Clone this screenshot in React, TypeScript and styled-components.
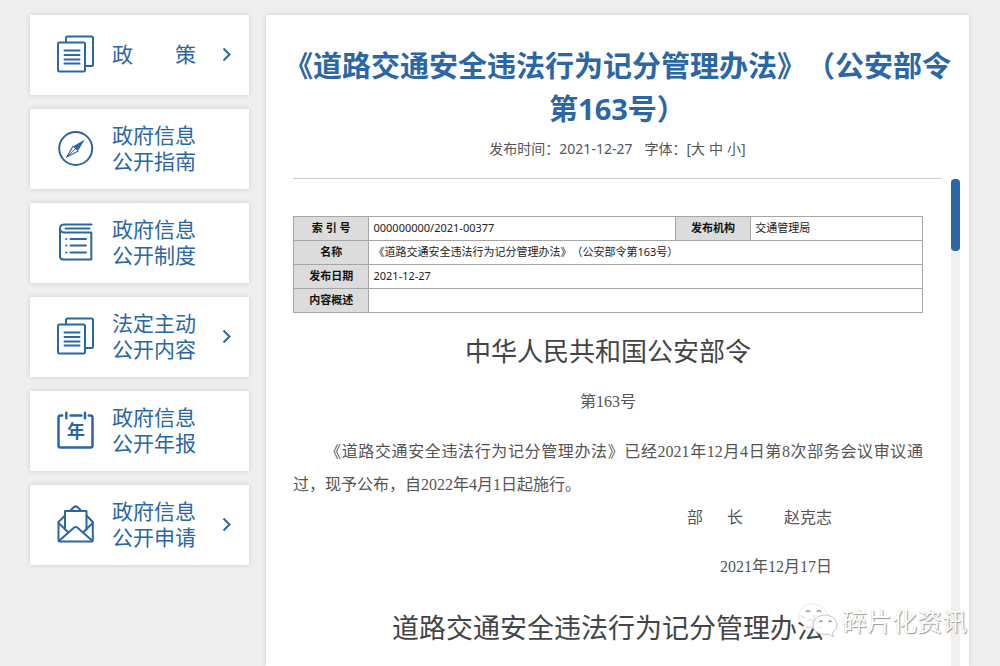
import React from "react";
import styled, { createGlobalStyle } from "styled-components";

const blue = "#2b66a5";
const sans = `"Noto Sans", "Noto Sans CJK SC", sans-serif`;
const serif = `"Liberation Serif", "Noto Sans CJK SC", serif`;

const GlobalStyle = createGlobalStyle`
  *, *::before, *::after { box-sizing: border-box; }
  body {
    margin: 0;
    background: #efefef;
    color: #444;
    font-family: ${sans};
    text-spacing-trim: space-all;
  }
  h1, h2, p { margin: 0; font-weight: 400; }
`;

const Page = styled.div`
  position: relative;
  display: grid;
  grid-template-columns: 219px minmax(0, 1fr);
  gap: 17px;
  min-height: 100vh;
  padding: 15px 31px 0 30px;
  overflow: hidden;
`;

const Sidebar = styled.nav`
  display: flex;
  flex-direction: column;
  gap: 14px;
`;

const NavCard = styled.a`
  display: flex;
  align-items: center;
  gap: 17px;
  min-height: 80px;
  padding: 0 18px 2px 27px;
  background: #fff;
  box-shadow: 0 0 5px rgba(0, 0, 0, 0.14);
  color: ${blue};
  font-size: 21px;
  line-height: 26px;
  text-decoration: none;
`;

const NavLabel = styled.span`
  white-space: pre;
`;

const NavIcon = styled.svg`
  flex: none;
  width: 38px;
  height: 38px;
  fill: none;
  stroke: currentColor;
  stroke-width: 2;
  stroke-linecap: round;
  stroke-linejoin: round;
`;

const Chevron = styled.svg`
  flex: none;
  width: 9px;
  height: 14px;
  margin-left: auto;
  fill: none;
  stroke: currentColor;
  stroke-width: 2;
`;

const Main = styled.main`
  display: flex;
  flex-direction: column;
  padding-top: 29px;
  background: #fff;
  box-shadow: 0 0 5px rgba(0, 0, 0, 0.14);
`;

const Header = styled.header`
  padding: 0 15px;
  text-align: center;
`;

const Title = styled.h1`
  color: ${blue};
  font-size: 29px;
  font-weight: 700;
  line-height: 43px;
`;

const Meta = styled.div`
  display: flex;
  justify-content: center;
  gap: 12px;
  margin: 9px 0 19px;
  color: #555;
  font-size: 14px;
  line-height: 20px;
`;

const SizePicker = styled.span`
  display: inline-flex;
  gap: 4px;
`;

const SizeButton = styled.button`
  padding: 0;
  border: 0;
  background: none;
  color: inherit;
  font: inherit;
  cursor: pointer;
`;

const Scroller = styled.div`
  display: flex;
  flex: 1;
  gap: 10px;
  padding: 0 9px 0 27px;
`;

const Article = styled.article`
  flex: 1;
  min-width: 0;
  padding: 37px 18px 0 0;
  border-top: 1px solid #ccc;
`;

const Rail = styled.div`
  flex: none;
  width: 9px;
  padding-top: 1px;
  background: #f0f0f0 content-box;
`;

const Thumb = styled.div`
  height: 72px;
  border-radius: 4px;
  background: ${blue};
`;

const InfoTable = styled.table`
  width: 100%;
  border-collapse: collapse;
  table-layout: fixed;
  border: 1px solid #999;
  color: #222;
  font-size: 11px;
  line-height: 16px;

  th,
  td {
    height: 24px;
    padding: 0 4px 1px;
    border: 1px solid #a6a6a6;
    text-align: left;
  }

  th {
    background: #dcdcdc;
    color: #111;
    text-align: center;
  }
`;

const Col = styled.col<{ $width?: string }>`
  width: ${(p) => p.$width ?? "auto"};
`;

const Heading = styled.h2<{ $size: number; $top: number }>`
  margin-top: ${(p) => p.$top}px;
  color: #444;
  font-size: ${(p) => p.$size}px;
  line-height: 33px;
  text-align: center;
`;

const Paragraph = styled.p<{ $align?: string }>`
  margin-top: 17px;
  color: #555;
  font-family: ${serif};
  font-size: 16px;
  line-height: 33px;
  text-align: ${(p) => p.$align ?? "justify"};
  text-indent: ${(p) => (p.$align ? "0" : "2em")};
`;

const Signature = styled.div`
  padding-right: 91px;
  color: #555;
  font-family: ${serif};
  font-size: 16px;
  line-height: 33px;
  text-align: right;
`;

const Signer = styled.p`
  display: flex;
  justify-content: flex-end;
  gap: 41px;
  margin-bottom: 16px;
`;

const Post = styled.span`
  display: flex;
  gap: 24px;
`;

const Watermark = styled.div`
  position: absolute;
  right: 33px;
  bottom: 27px;
  display: flex;
  align-items: center;
  gap: 4px;
  color: #fff;
  font-size: 25px;
  line-height: 36px;
  text-shadow: 1px 1px 1px #999, 0 0 1px #bbb;
`;

const ChatLogo = styled.svg`
  width: 40px;
  height: 36px;
`;

function DocsIcon() {
  return (
    <NavIcon viewBox="0 0 38 38" aria-hidden="true">
      <path d="M9 6.500V3Q9 1.500 10.500 1.500H34.500Q36 1.500 36 3V29.500Q36 31 34.500 31H29" />
      <rect x="1" y="7.500" width="27" height="29" rx="1.500" />
      <path d="M7.500 15.500H22.500M7.500 20H22.500M7.500 24.500H22.500M7.500 28.500H22.500" />
    </NavIcon>
  );
}

function CompassIcon() {
  return (
    <NavIcon viewBox="0 0 38 38" aria-hidden="true">
      <circle cx="18.700" cy="19.500" r="16.500" />
      <path d="M27.800 10.500L15.800 17.500L20.800 22.300Z" fill="currentColor" stroke="none" />
      <path d="M15.800 17.500L9.800 28L20.800 22.300" strokeWidth="1.200" />
      <path d="M9.800 28L18.300 20" strokeWidth="1" />
    </NavIcon>
  );
}

function BookIcon() {
  return (
    <NavIcon viewBox="0 0 38 38" aria-hidden="true">
      <path d="M34.500 1.500H7Q3 1.800 3 5.500V33Q3 36.500 6.500 36.500H34.300V9.500H7Q3 9.200 3 5.500M8.500 5.500H32.500" />
      <path d="M13.500 16H29M13.500 22.500H29M13.500 29.500H29M9.300 16H9.400M9.300 22.500H9.400M9.300 29.500H9.400" />
    </NavIcon>
  );
}

const CalendarText = styled.text`
  fill: currentColor;
  stroke: none;
  font-size: 18px;
  font-weight: 700;
  text-anchor: middle;
`;

function CalendarIcon() {
  return (
    <NavIcon viewBox="0 0 38 38" aria-hidden="true">
      <path
        d="M5.200 4.500H3.500Q1.500 4.500 1.500 6.500V34.500Q1.500 36.500 3.500 36.500H33.500Q35.500 36.500 35.500 34.500V6.500Q35.500 4.500 33.500 4.500H31.800M13.500 4.500H24.500M9.300 1.700V7.300M28 1.700V7.300"
        strokeWidth="2.500"
      />
      <CalendarText x="19" y="27">年</CalendarText>
    </NavIcon>
  );
}

function MailIcon() {
  return (
    <NavIcon viewBox="0 0 38 38" aria-hidden="true">
      <path d="M8 10.500L1.500 17V35.500Q1.500 36.500 2.500 36.500H34.800Q35.800 36.500 35.800 35.500V17L29.500 10.500" />
      <path d="M8 24.500V6H29.500V24.500M13.500 5.500L17 2Q18.700 .7 20.400 2L24 5.500" />
      <path d="M1.500 18L10.500 26.500M35.800 18L27 26.500M2.500 35.500L16 23.500Q18.700 20.700 21.400 23.500L35 35.500" />
    </NavIcon>
  );
}

const navItems = [
  { label: "政　　策", Icon: DocsIcon, more: true },
  { label: "政府信息\n公开指南", Icon: CompassIcon, more: false },
  { label: "政府信息\n公开制度", Icon: BookIcon, more: false },
  { label: "法定主动\n公开内容", Icon: DocsIcon, more: true },
  { label: "政府信息\n公开年报", Icon: CalendarIcon, more: false },
  { label: "政府信息\n公开申请", Icon: MailIcon, more: true },
];

export default function App() {
  return (
    <>
      <GlobalStyle />
      <Page lang="zh-CN">
        <Sidebar>
          {navItems.map(({ label, Icon, more }) => (
            <NavCard href="#" key={label}>
              <Icon />
              <NavLabel>{label}</NavLabel>
              {more && (
                <Chevron viewBox="0 0 9 14" aria-hidden="true">
                  <path d="M1.500 1.500L7.500 7.500L1.500 13.500" />
                </Chevron>
              )}
            </NavCard>
          ))}
        </Sidebar>
        <Main>
          <Header>
            <Title>《道路交通安全违法行为记分管理办法》（公安部令第163号）</Title>
            <Meta>
              <span>发布时间：2021-12-27</span>
              <span>
                字体：
                <SizePicker>
                  <span>[<SizeButton type="button">大</SizeButton></span>
                  <SizeButton type="button">中</SizeButton>
                  <span><SizeButton type="button">小</SizeButton>]</span>
                </SizePicker>
              </span>
            </Meta>
          </Header>
          <Scroller>
            <Article>
              <InfoTable>
                <colgroup>
                  <Col $width="12%" />
                  <Col />
                  <Col $width="12%" />
                  <Col $width="27.3%" />
                </colgroup>
                <tbody>
                  <tr>
                    <th scope="row">索 引 号</th>
                    <td>000000000/2021-00377</td>
                    <th scope="row">发布机构</th>
                    <td>交通管理局</td>
                  </tr>
                  <tr>
                    <th scope="row">名称</th>
                    <td colSpan={3}>《道路交通安全违法行为记分管理办法》（公安部令第163号）</td>
                  </tr>
                  <tr>
                    <th scope="row">发布日期</th>
                    <td colSpan={3}>2021-12-27</td>
                  </tr>
                  <tr>
                    <th scope="row">内容概述</th>
                    <td colSpan={3} />
                  </tr>
                </tbody>
              </InfoTable>
              <Heading $size={26} $top={22}>中华人民共和国公安部令</Heading>
              <Paragraph $align="center">第163号</Paragraph>
              <Paragraph>
                《道路交通安全违法行为记分管理办法》已经2021年12月4日第8次部务会议审议通过，现予公布，自2022年4月1日起施行。
              </Paragraph>
              <Signature>
                <Signer>
                  <Post>
                    <span>部</span>
                    <span>长</span>
                  </Post>
                  <span>赵克志</span>
                </Signer>
                <p>2021年12月17日</p>
              </Signature>
              <Heading $size={27} $top={28}>道路交通安全违法行为记分管理办法</Heading>
            </Article>
            <Rail>
              <Thumb />
            </Rail>
          </Scroller>
        </Main>
        <Watermark>
          <ChatLogo viewBox="0 0 40 36" aria-hidden="true">
            <path
              d="M15 1C6.500 1 1 6.500 1 13C1 17 3 20.200 6.300 22.500L5 27L10 24.500C20 27 29 21.500 29 13C29 6.500 23 1 15 1Z"
              fill="#fff"
              fillOpacity=".9"
              stroke="#e4e4e4"
              strokeWidth=".8"
            />
            <path
              d="M27 12C20 12 15 16.500 15 22C15 28.500 22 33 30.500 31L35.500 34L34.500 29.500C37.500 27.500 39 25 39 22C39 16.500 34 12 27 12Z"
              fill="#fff"
              fillOpacity=".9"
              stroke="#b4b4b4"
              strokeWidth=".8"
            />
            <path
              d="M8 9Q10 6.500 12 9M19 9Q21 6.500 23 9M21.500 19Q23 17 24.500 19M30.500 19Q32 17 33.500 19"
              fill="none"
              stroke="#999"
              strokeWidth="1.300"
            />
          </ChatLogo>
          <span>碎片化资讯</span>
        </Watermark>
      </Page>
    </>
  );
}
